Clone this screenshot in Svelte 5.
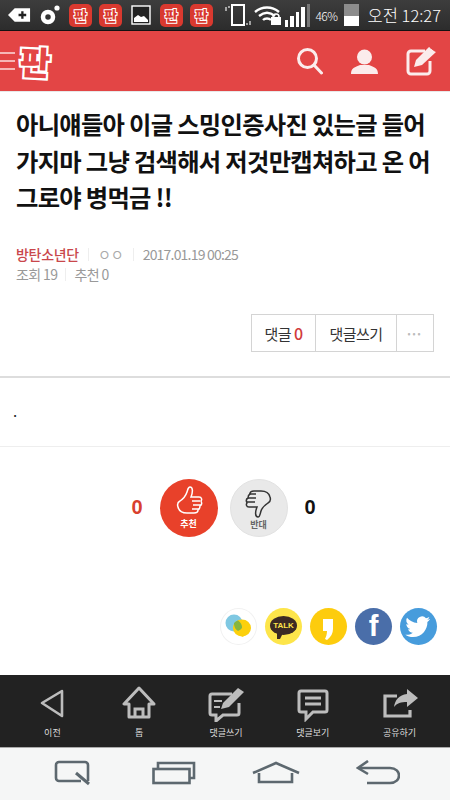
<script lang="ts">
	const cjk = '판';
	const tabs = [
		{ label: '이전', id: 'prev' },
		{ label: '톱', id: 'top' },
		{ label: '댓글쓰기', id: 'write' },
		{ label: '댓글보기', id: 'view' },
		{ label: '공유하기', id: 'share' }
	];
</script>

<div class="page">
	<div class="status">
		<div class="status-left">
			<svg width="23" height="16" viewBox="0 0 24 16"><path d="M0 8 7 1h16v14H7z" fill="#fff"/><path d="M15 4v8M11 8h8" stroke="#222" stroke-width="2.4"/></svg>
			<svg class="dot" width="20" height="20" viewBox="0 0 20 20"><circle cx="8" cy="12" r="5" fill="none" stroke="#fff" stroke-width="4.5"/><circle cx="17" cy="3" r="2.6" fill="#fff"/></svg>
			<span class="app-ic">{cjk}</span>
			<span class="app-ic">{cjk}</span>
			<svg class="pic" width="20" height="20" viewBox="0 0 20 20"><rect x="1" y="1" width="18" height="18" fill="#222" stroke="#fff" stroke-width="1.4"/><path d="M3 17v-4l4-3 3 2 3-1 4 4v2z" fill="#fff"/></svg>
			<span class="app-ic">{cjk}</span>
			<span class="app-ic">{cjk}</span>
		</div>
		<div class="status-right">
			<svg width="26" height="24" viewBox="0 0 26 24"><path d="M1 4v4M4 3v2M22 20v2M25 18v4" stroke="#ddd" stroke-width="1.3"/><rect x="7" y="2" width="12" height="20" fill="none" stroke="#fff" stroke-width="2"/></svg>
			<svg width="28" height="20" viewBox="0 0 28 20"><path d="M1 7c7-6 17-6 24 0M5 11c5-4 11-4 16 0M9 15c2-2 6-2 8 0" fill="none" stroke="#fff" stroke-width="2.4"/><rect x="17" y="12" width="10" height="8" fill="#fff"/><path d="M19 12c0-4 6-4 6 0" fill="none" stroke="#fff" stroke-width="1.5"/></svg>
			<div class="bars">
				<i style="height:7px"></i><i style="height:11px"></i><i style="height:15px"></i><i style="height:20px"></i><i class="off" style="height:23px"></i>
			</div>
			<span class="pct">46%</span>
			<div class="batt"><b></b></div>
			<span class="clock">오전 12:27</span>
		</div>
	</div>

	<header class="topbar">
		<div class="brand">
			<div class="menu"><i></i><i></i><i></i></div>
			<span class="logo">{cjk}</span>
		</div>
		<div class="top-actions">
			<svg width="27" height="28" viewBox="0 0 27 28"><circle cx="11.5" cy="11.5" r="9" fill="none" stroke="#fbecec" stroke-width="3"/><path d="M18 18l7.5 8" stroke="#fbecec" stroke-width="3" stroke-linecap="round"/></svg>
			<svg width="27" height="27" viewBox="0 0 27 27"><circle cx="13.5" cy="9" r="7.5" fill="#fbecec"/><path d="M0 26c0-6 4-7 9-9h9c5 2 9 3 9 9z" fill="#fbecec"/></svg>
			<svg width="31" height="31" viewBox="0 0 31 31"><path d="M24 15v10a3 3 0 0 1-3 3H5a3 3 0 0 1-3-3V8a3 3 0 0 1 3-3h14" fill="none" stroke="#fbecec" stroke-width="3"/><path d="M8 21l2-7L23 1l7 5-14 13z" fill="#fbecec"/><path d="M24 1.5l5.5 4" stroke="#e34545" stroke-width="1"/></svg>
		</div>
	</header>

	<article class="post">
		<h1>아니얘들아 이글 스밍인증사진 있는글 들어<br />가지마 그냥 검색해서 저것만캡쳐하고 온 어<br />그로야 병먹금 !!</h1>
		<div class="meta">
			<span class="author">방탄소년단</span>
			<span class="sep"></span>
			<span class="circles">ㅇㅇ</span>
			<span class="sep"></span>
			<span class="date">2017.01.19 00:25</span>
		</div>
		<div class="meta second">
			<span>조회 19</span>
			<span class="sep"></span>
			<span>추천 0</span>
		</div>
		<div class="comment-row">
			<div class="comment-box">
				<span class="cb cb-count">댓글 <em>0</em></span>
				<span class="cb cb-write">댓글쓰기</span>
				<span class="cb cb-more">•••</span>
			</div>
		</div>
	</article>

	<div class="body-text">.</div>

	<div class="vote">
		<span class="num up">0</span>
		<div class="circle red">
			<svg width="30" height="31" viewBox="0 0 30 31"><path d="M6 15c3-2 6-6 7-9 1-3 1-5 3-5 3 0 3 5 1 10h8c3 0 3 3 2 4 1 2 1 4-1 5 0 2 0 3-2 4 0 3-2 3-4 3H13c-4 0-8-2-9-6-1-3 0-5 2-6z" fill="none" stroke="#fff" stroke-width="1.5"/><path d="M18 15h8M19 19h8M18 23h7" stroke="#fff" stroke-width="1.4"/></svg>
			<span>추천</span>
		</div>
		<div class="circle grey">
			<svg width="30" height="31" viewBox="0 0 30 31"><path d="M24 16c-3 2-6 5-7 8-1 3-1 6-3 6-3 0-3-5-1-10H5c-3 0-3-3-2-4-1-2-1-4 1-5 0-2 0-3 2-4 0-3 2-3 4-3h7c4 0 8 2 9 6 1 3 0 5-2 6z" fill="none" stroke="#333" stroke-width="1.5"/><path d="M4 11h8M3 15h8M5 7h7" stroke="#333" stroke-width="1.4"/></svg>
			<span>반대</span>
		</div>
		<span class="num down">0</span>
	</div>

	<div class="share">
		<div class="sns white">
			<svg width="37" height="37" viewBox="0 0 37 37"><circle cx="14" cy="15" r="8.5" fill="#7fc8e2"/><ellipse cx="22" cy="20" rx="9" ry="8.5" fill="#fcd00c"/><path d="M18 26l5 3 2-3z" fill="#fcd00c"/><path d="M18 12.500a8.500 8.500 0 0 1 4 7.500 8.500 8.500 0 0 1-4 3 9 9 0 0 1-4-8 8 8 0 0 1 4-2.500z" fill="#86b53f"/></svg>
		</div>
		<div class="sns kakao">
			<div class="talk">TALK</div>
		</div>
		<div class="sns story">
			<svg width="37" height="37" viewBox="0 0 37 37"><path d="M13 11h10v10c0 4-2 8-6 11l-2-1c1-2 2-5 2-8h-4z" fill="#fff"/></svg>
		</div>
		<div class="sns fb"><span>f</span></div>
		<div class="sns tw">
			<svg width="37" height="37" viewBox="0 0 37 37"><path d="M30 11c-1 .5-2 .8-3 1 1-.6 2-1.700 2.300-3-1 .6-2.100 1-3.300 1.300a5 5 0 0 0-8.700 4.600C13 14.700 9.500 12.800 7 9.800c-1.400 2.400-.7 5.300 1.600 6.800-.8 0-1.600-.2-2.300-.6 0 2.500 1.800 4.600 4.100 5.100-.7.200-1.500.2-2.300.1.700 2 2.500 3.500 4.700 3.500-2.200 1.700-4.900 2.400-7.500 2.100 2.200 1.400 4.900 2.300 7.700 2.300 9.400 0 14.700-7.900 14.400-15 1-.8 1.900-1.700 2.600-2.800z" fill="#fff"/></svg>
		</div>
	</div>

	<nav class="tabs">
		{#each tabs as tab}
			<div class="tab">
				<svg width="40" height="36" viewBox="0 0 40 36">
					{#if tab.id === 'prev'}
						<path d="M30 5 10 17l20 13z" fill="none" stroke="#bdbdbd" stroke-width="2.600" stroke-linejoin="round"/>
					{:else if tab.id === 'top'}
						<path d="M20 2 5 18h5v13h20V18h5z" fill="none" stroke="#bdbdbd" stroke-width="3" stroke-linejoin="round"/><path d="M16 31v-8h8v8" fill="none" stroke="#bdbdbd" stroke-width="3"/>
					{:else if tab.id === 'write'}
						<path d="M26 8H6a2 2 0 0 0-2 2v17a2 2 0 0 0 2 2h4v6l7-6h14a2 2 0 0 0 2-2V17" fill="none" stroke="#bdbdbd" stroke-width="3"/><path d="M15 23l2-6L32 2l6 4-15 15z" fill="#bdbdbd"/><path d="M8 15h8M8 21h6" stroke="#bdbdbd" stroke-width="2"/>
					{:else if tab.id === 'view'}
						<path d="M8 5h24a2 2 0 0 1 2 2v17a2 2 0 0 1-2 2H20l-7 7v-7H8a2 2 0 0 1-2-2V7a2 2 0 0 1 2-2z" fill="none" stroke="#bdbdbd" stroke-width="3"/><path d="M12 12h16M12 18h16" stroke="#bdbdbd" stroke-width="3"/>
					{:else}
						<path d="M30 24v6H5V10h12" fill="none" stroke="#bdbdbd" stroke-width="3.200"/><path d="M27 3l11 9-11 9v-5c-6 0-10 1-13 5 1-7 5-12 13-13z" fill="#bdbdbd"/>
					{/if}
				</svg>
				<span>{tab.label}</span>
			</div>
		{/each}
	</nav>

	<div class="softkeys">
		<svg width="38" height="26" viewBox="0 0 38 26"><path d="M28 21H6a3 3 0 0 1-3-3V5a3 3 0 0 1 3-3h26a3 3 0 0 1 3 3v16" fill="none" stroke="#5d686f" stroke-width="2.600"/><path d="M23 13l13 11" stroke="#5d686f" stroke-width="3"/></svg>
		<svg class="recents" width="44" height="24" viewBox="0 0 44 24"><rect x="1.500" y="8" width="36" height="14" fill="none" stroke="#5d686f" stroke-width="2.600"/><path d="M6 7V2h36v15h-4" fill="none" stroke="#5d686f" stroke-width="2.600"/></svg>
		<svg width="48" height="24" viewBox="0 0 48 24"><path d="M1 12 24 2l23 10" fill="none" stroke="#5d686f" stroke-width="2.600"/><path d="M7 12v9h33v-9" fill="none" stroke="#5d686f" stroke-width="2.600"/></svg>
		<svg width="44" height="26" viewBox="0 0 44 26"><path d="M3 8h31c12 0 12 15 0 15H11" fill="none" stroke="#5d686f" stroke-width="2.600"/><path d="M12 1 2 8l10 6" fill="none" stroke="#5d686f" stroke-width="2.600"/></svg>
	</div>
</div>

<style>
	:global(body) {
		margin: 0;
		background: #fff;
	}

	.page {
		width: 450px;
		height: 800px;
		overflow: hidden;
		display: flex;
		flex-direction: column;
		font-family: 'Noto Sans CJK KR', 'Noto Sans', sans-serif;
		background: #fff;
	}

	/* status bar */
	.status {
		height: 30px;
		flex: none;
		display: flex;
		justify-content: space-between;
		align-items: center;
		background: linear-gradient(#3d3d3d, #2c2c2c);
		border-bottom: 1px solid #111;
		padding: 0 9px 0 8px;
	}

	.status-left,
	.status-right {
		display: flex;
		align-items: center;
	}

	.status-left {
		gap: 7px;
	}

	.dot {
		margin-left: 2px;
		margin-right: 2px;
	}

	.pic {
		margin: 0 2px;
	}

	.app-ic {
		width: 23px;
		height: 23px;
		border-radius: 5px;
		background: #d9392f;
		color: #d9392f;
		-webkit-text-stroke: 2px #fff;
		paint-order: stroke fill;
		font-size: 14px;
		font-weight: 900;
		line-height: 22px;
		text-align: center;
	}

	.status-right {
		gap: 3px;
		color: #fff;
	}

	.bars {
		display: flex;
		align-items: flex-end;
		gap: 2px;
		height: 24px;
		margin-right: 2px;
	}

	.bars i {
		width: 3.500px;
		background: #fff;
	}

	.bars i.off {
		background: #777;
	}

	.pct {
		font-size: 12px;
		font-weight: 300;
		letter-spacing: -0.500px;
		margin-right: 3px;
	}

	.batt {
		width: 15px;
		height: 22px;
		background: #8c8c8c;
		display: flex;
		align-items: flex-end;
		margin-right: 6px;
	}

	.batt b {
		display: block;
		width: 100%;
		height: 10px;
		background: #fff;
	}

	.clock {
		font-size: 16.500px;
		font-weight: 300;
		white-space: nowrap;
	}

	/* red header */
	.topbar {
		height: 60px;
		flex: none;
		display: flex;
		justify-content: space-between;
		align-items: center;
		background: #e34545;
		border-bottom: 1px solid #e8e8e8;
		padding-right: 13px;
	}

	.brand {
		display: flex;
		align-items: center;
	}

	.menu {
		width: 15px;
		display: flex;
		flex-direction: column;
		gap: 6px;
	}

	.menu i {
		display: block;
		height: 2px;
		background: #f6b7b7;
	}

	.logo {
		font-size: 33px;
		font-weight: 900;
		line-height: 44px;
		color: #e34545;
		-webkit-text-stroke: 4.500px #fff;
		paint-order: stroke fill;
		margin: 0 0 0 5px;
		transform: rotate(3deg);
	}

	.top-actions {
		display: flex;
		align-items: center;
		gap: 28px;
	}

	/* post */
	.post {
		padding: 0 16px;
		flex: none;
	}

	h1 {
		margin: 14px 0 0;
		height: 112px;
		font-size: 24.300px;
		font-weight: 700;
		line-height: 36.500px;
		letter-spacing: -0.700px;
		white-space: nowrap;
		color: #111;
	}

	.meta {
		display: flex;
		align-items: center;
		gap: 9px;
		margin-top: 26px;
		height: 20px;
		font-size: 14px;
		letter-spacing: -0.600px;
		color: #999;
	}

	.meta.second {
		margin-top: 0;
		gap: 8px;
	}

	.author {
		color: #c9474b;
		font-weight: 500;
		letter-spacing: -0.300px;
	}

	.circles {
		letter-spacing: 0;
		color: #aaa;
	}

	.date {
		letter-spacing: -0.800px;
	}

	.sep {
		width: 1px;
		height: 13px;
		background: #eee;
	}

	.comment-row {
		display: flex;
		justify-content: flex-end;
		margin-top: 30px;
	}

	.comment-box {
		display: flex;
		height: 36px;
		border: 1px solid #d4d4d4;
		font-size: 15px;
		letter-spacing: -0.500px;
		color: #333;
	}

	.cb {
		display: flex;
		align-items: center;
		justify-content: center;
		white-space: pre;
		border-right: 1px solid #d4d4d4;
	}

	.cb-count {
		width: 63px;
	}

	.cb-count em {
		font-style: normal;
		font-weight: 500;
		font-size: 16px;
		color: #d13b3b;
	}

	.cb-write {
		width: 80px;
	}

	.cb-more {
		width: 36px;
		border-right: 0;
		font-size: 9px;
		letter-spacing: 2px;
		color: #bbb;
	}

	.body-text {
		flex: none;
		margin-top: 24px;
		height: 71px;
		border-top: 2px solid #ddd;
		border-bottom: 1px solid #eee;
		padding: 21px 0 0 13px;
		box-sizing: border-box;
		font-size: 15px;
		line-height: 24px;
		color: #222;
	}

	/* vote */
	.vote {
		flex: none;
		display: flex;
		align-items: center;
		justify-content: center;
		gap: 12px;
		margin-top: 31px;
		height: 59px;
		padding-right: 3px;
	}

	.num {
		width: 15px;
		font-size: 20px;
		font-weight: 700;
		text-align: center;
		font-family: 'Liberation Sans', sans-serif;
	}

	.num.up {
		color: #d8402e;
		margin-right: 3px;
	}

	.num.down {
		color: #111;
		margin-left: 3px;
	}

	.circle {
		width: 58px;
		height: 58px;
		border-radius: 50%;
		display: flex;
		flex-direction: column;
		align-items: center;
		padding-top: 7px;
		box-sizing: border-box;
		font-size: 9px;
		line-height: 11px;
		font-weight: 700;
	}

	.circle svg {
		margin-bottom: 1px;
	}

	.circle.red {
		background: #e8412a;
		color: #fff;
	}

	.circle.grey {
		background: #e9e9e9;
		color: #666;
		border: 1px solid #e2e2e2;
	}

	/* share icons */
	.share {
		flex: none;
		display: flex;
		justify-content: flex-end;
		gap: 8px;
		margin-top: 71px;
		padding-right: 13px;
		height: 38px;
	}

	.sns {
		width: 37px;
		height: 37px;
		border-radius: 50%;
		display: flex;
		align-items: center;
		justify-content: center;
		overflow: hidden;
	}

	.sns.white {
		background: #fff;
		box-shadow: inset 0 0 0 1px #f1f1f1;
	}

	.sns.kakao {
		background: #fde54a;
	}

	.talk {
		position: relative;
		background: #3b2a24;
		color: #fde54a;
		width: 27px;
		height: 19px;
		border-radius: 50%;
		font: 700 8px/19px 'Liberation Sans', sans-serif;
		text-align: center;
		margin-top: -3px;
	}

	.talk::after {
		content: '';
		position: absolute;
		left: 7px;
		bottom: -4px;
		border-left: 3px solid #3b2a24;
		border-right: 3px solid transparent;
		border-top: 6px solid #3b2a24;
	}

	.sns.story {
		background: #fdcc0d;
	}

	.sns.fb {
		background: #4a6ea9;
		color: #fff;
		font: 700 29px/37px 'Liberation Sans', sans-serif;
	}

	.sns.tw {
		background: #479cdc;
	}

	/* bottom tabs */
	.tabs {
		flex: none;
		margin-top: 29px;
		height: 72px;
		background: #222;
		border-bottom: 1px solid #aaa;
		display: flex;
		padding: 0 7px 0 9px;
	}

	.tab {
		flex: 1;
		display: flex;
		flex-direction: column;
		align-items: center;
		padding-top: 11px;
		font-size: 9px;
		line-height: 12px;
		color: #ddd;
	}

	.tab span {
		margin-top: 5px;
	}

	/* android soft keys */
	.softkeys {
		flex: 1;
		background: #f5f6f6;
		display: flex;
		justify-content: space-between;
		align-items: center;
		padding: 0 50px 3px 53px;
	}

	.recents {
		margin-left: 5px;
	}
</style>
